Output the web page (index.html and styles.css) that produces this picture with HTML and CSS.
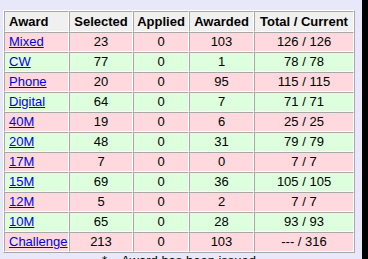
FILE: index.html
```html
<!DOCTYPE html>
<html>
<head>
<meta charset="utf-8">
<link rel="stylesheet" href="styles.css">
</head>
<body>
<div class="page">
  <div class="content">
    <table class="awards">
      <thead>
        <tr class="head">
          <th class="left c-award">Award</th>
          <th class="c-sel">Selected</th>
          <th class="c-app">Applied</th>
          <th class="c-awd">Awarded</th>
          <th class="c-tot">Total / Current</th>
        </tr>
      </thead>
      <tbody>
        <tr class="red"><td class="left"><a href="#">Mixed</a></td><td>23</td><td>0</td><td>103</td><td>126 / 126</td></tr>
        <tr class="green"><td class="left"><a href="#">CW</a></td><td>77</td><td>0</td><td>1</td><td>78 / 78</td></tr>
        <tr class="red"><td class="left"><a href="#">Phone</a></td><td>20</td><td>0</td><td>95</td><td>115 / 115</td></tr>
        <tr class="green"><td class="left"><a href="#">Digital</a></td><td>64</td><td>0</td><td>7</td><td>71 / 71</td></tr>
        <tr class="red"><td class="left"><a href="#">40M</a></td><td>19</td><td>0</td><td>6</td><td>25 / 25</td></tr>
        <tr class="green"><td class="left"><a href="#">20M</a></td><td>48</td><td>0</td><td>31</td><td>79 / 79</td></tr>
        <tr class="red"><td class="left"><a href="#">17M</a></td><td>7</td><td>0</td><td>0</td><td>7 / 7</td></tr>
        <tr class="green"><td class="left"><a href="#">15M</a></td><td>69</td><td>0</td><td>36</td><td>105 / 105</td></tr>
        <tr class="red"><td class="left"><a href="#">12M</a></td><td>5</td><td>0</td><td>2</td><td>7 / 7</td></tr>
        <tr class="green"><td class="left"><a href="#">10M</a></td><td>65</td><td>0</td><td>28</td><td>93 / 93</td></tr>
        <tr class="red"><td class="left"><a href="#">Challenge</a></td><td>213</td><td>0</td><td>103</td><td>--- / 316</td></tr>
      </tbody>
    </table>
    <p class="note">* = Award has been issued</p>
  </div>
  <div class="edge"></div>
</div>
</body>
</html>
```
FILE: styles.css
```css
html, body {
  margin: 0;
  padding: 0;
  height: 100%;
}
body {
  font-family: "Liberation Sans", Arial, sans-serif;
  font-size: 13px;
  color: #000;
  overflow: hidden;
}
.page {
  display: flex;
  height: 259px;
  overflow: hidden;
}
.content {
  flex: 1;
  background: #e8e8fa;
  padding: 10px 0 0 3px;
}
.edge {
  width: 6px;
  background: #000;
}
.awards {
  border-collapse: separate;
  border-spacing: 0;
  border: 1px solid;
  border-color: #ffffff #a8a8a8 #a8a8a8 #ffffff;
  width: 352px;
  table-layout: fixed;
}
.awards th, .awards td {
  box-sizing: border-box;
  border: 1px solid;
  border-color: #a8a8a8 #ffffff #ffffff #a8a8a8;
  padding: 1px 3px;
  line-height: 16px;
  text-align: center;
  white-space: nowrap;
}
.awards th {
  background: #f0f0f0;
  font-weight: bold;
  line-height: 17px;
  padding: 1px 2px;
}
.c-award { width: 65px; }
.c-sel { width: 64px; }
.c-app { width: 56px; }
.c-awd { width: 65px; }
.c-tot { width: 100px; }
.awards .left {
  text-align: left;
  padding-left: 4px;
}
.red td {
  background: #ffd9dd;
}
.green td {
  background: #ddffdd;
}
.awards a {
  color: #0000ee;
  text-decoration: underline;
}
.note {
  margin: 0;
  padding-left: 99px;
  line-height: 15px;
}
```
